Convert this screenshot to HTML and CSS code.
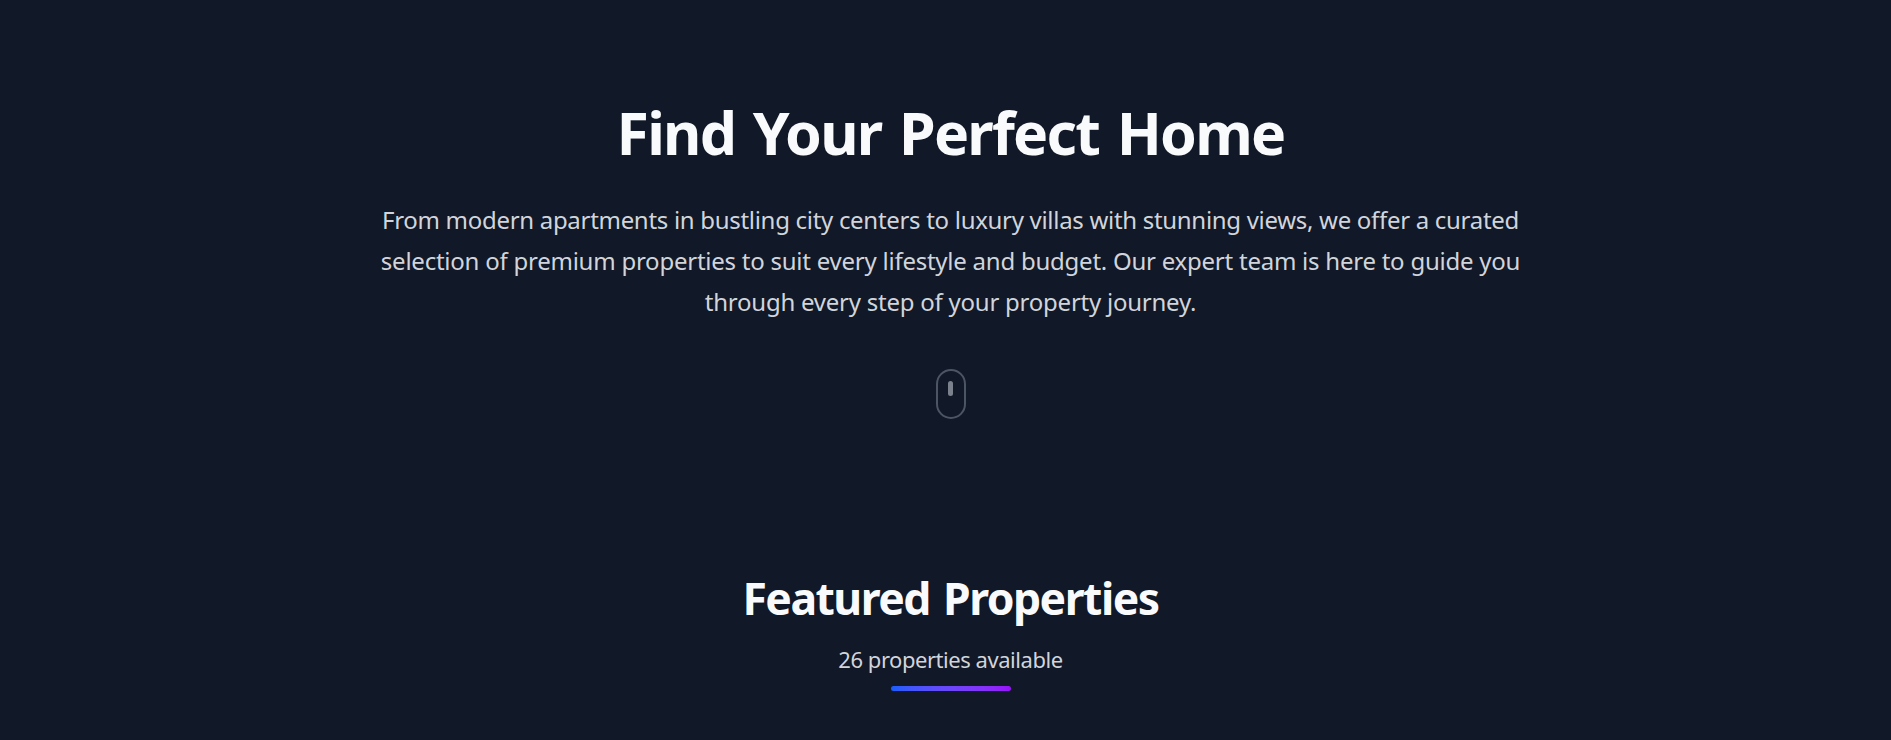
FILE: index.html
```html
<!DOCTYPE html>
<html lang="en">
<head>
<meta charset="utf-8">
<title>Find Your Perfect Home</title>
<link rel="stylesheet" href="styles.css">
</head>
<body>
<section class="hero">
<h1 class="hero-title">Find Your Perfect Home</h1>
<p class="hero-text"><span class="line line-one">From modern apartments in bustling city centers to luxury villas with stunning views, we offer a curated</span> <span class="line">selection of premium properties to suit every lifestyle and budget. Our expert team is here to guide you</span> <span class="line">through every step of your property journey.</span></p>
<div class="mouse"><div class="wheel"></div></div>
</section>
<section class="featured">
<h2 class="featured-title">Featured Properties</h2>
<p class="featured-count">26 properties available</p>
<div class="rule"></div>
</section>
</body>
</html>
```
FILE: styles.css
```css
* { box-sizing: border-box; margin: 0; padding: 0; }
body { background: #111827; color: #f9fafb; font-family: "Noto Sans", "Open Sans", sans-serif; height: 740px; overflow: hidden; }
.hero { display: flex; flex-direction: column; align-items: center; padding-top: 95px; padding-left: 10px; height: 549px; }
.hero-title { font-size: 59px; line-height: 75px; font-weight: 700; letter-spacing: -1.75px; word-spacing: 4px; white-space: nowrap; }
.hero-text { margin-top: 29px; font-size: 24px; line-height: 41px; letter-spacing: -0.24px; color: #d1d5db; text-align: center; }
.line { display: block; white-space: nowrap; }
.line-one { letter-spacing: -0.3px; }
.mouse { margin-top: 47px; width: 30px; height: 50px; border: 2px solid #4b5563; border-radius: 15px; display: flex; justify-content: center; padding-top: 10px; }
.wheel { width: 5px; height: 15px; border-radius: 3px; background: #7c828d; }
.featured { display: flex; flex-direction: column; align-items: center; padding-top: 24px; padding-left: 10px; }
.featured-title { font-size: 44.5px; line-height: 50px; font-weight: 700; letter-spacing: -1.5px; word-spacing: 3px; }
.featured-count { margin-top: 20px; font-size: 22px; line-height: 32px; letter-spacing: -0.46px; color: #d1d5db; }
.rule { margin-top: 11px; width: 120px; height: 5px; border-radius: 3px; background: linear-gradient(to right in oklab, #155dfc, #9810fa); }
```
